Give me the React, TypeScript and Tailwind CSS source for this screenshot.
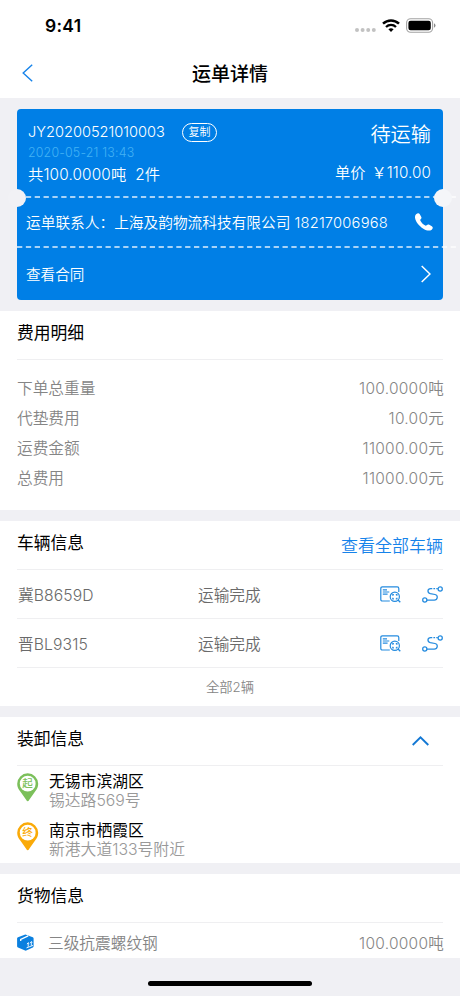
import type { ReactNode } from 'react';

const FEES = [
  { label: '下单总重量', value: '100.0000吨' },
  { label: '代垫费用', value: '10.00元' },
  { label: '运费金额', value: '11000.00元' },
  { label: '总费用', value: '11000.00元' },
];

const VEHICLES = [
  { plate: '冀B8659D', status: '运输完成' },
  { plate: '晋BL9315', status: '运输完成' },
];

function StatusBar() {
  return (
    <div className="flex h-[52px] items-center justify-between pl-[45px] pr-[24px]">
      <span className="text-[17.5px] font-semibold tracking-[0.3px] text-black">9:41</span>
      <div className="-mt-[2px] flex items-center">
        <svg className="mt-[9px] mr-[6px] h-[4px] w-[21px]" viewBox="0 0 21 4" fill="#c2c2c2">
          <circle cx="2" cy="2" r="2" />
          <circle cx="7.6" cy="2" r="2" />
          <circle cx="13.2" cy="2" r="2" />
          <circle cx="18.8" cy="2" r="2" />
        </svg>
        <svg className="mr-[6px] h-[13px] w-[18px]" viewBox="0 0 18 13" fill="none" stroke="#000">
          <path d="M1 4.7C5.6.4 12.4.4 17 4.7" strokeWidth="2.5" />
          <path d="M4 8C6.9 5.2 11.1 5.2 14 8" strokeWidth="2.3" />
          <path d="M9 13 6.4 10.3Q9 8 11.6 10.3Z" fill="#000" stroke="none" />
        </svg>
        <svg className="h-[15px] w-[30px]" viewBox="0 0 30 15">
          <rect x="0.6" y="0.8" width="26" height="13.4" rx="4" fill="none" stroke="#a3a3a3" strokeWidth="1.1" />
          <rect x="2.4" y="2.7" width="22.4" height="9.6" rx="2.2" fill="#000" />
          <path d="M28 5.3q1.5.7 1.5 2.2T28 9.7z" fill="#8a8a8a" />
        </svg>
      </div>
    </div>
  );
}

function NavBar() {
  return (
    <header className="grid h-[46px] grid-cols-[48px_1fr_48px] items-center">
      <svg className="-mt-[4px] ml-[22px] h-[18px] w-[11px]" viewBox="0 0 11 18" fill="none" stroke="#1683ea" strokeWidth="1.4">
        <path d="M10.2.8 1.2 9l9 8.2" />
      </svg>
      <h1 className="pt-[1px] text-center text-[19px] font-medium text-black">运单详情</h1>
    </header>
  );
}

function DashedLine() {
  return (
    <svg className="block h-[2px] w-[443px]" viewBox="0 0 443 2">
      <path d="M0 1H439" stroke="#fff" strokeOpacity="0.88" strokeWidth="1.6" strokeDasharray="5.3 3.55" />
    </svg>
  );
}

function OrderCard() {
  return (
    <section className="relative h-[191px] w-[426px] rounded-[4px] bg-[#007fe6] font-[350] text-white">
      <div className="flex h-[87px] justify-between pl-[11px] pr-[12px]">
        <div className="flex flex-col pt-[13px]">
          <div className="flex h-[20px] items-center">
            <span className="w-[154px] pt-[1px] text-[14.6px]">JY20200521010003</span>
            <span className="flex h-[19px] w-[35px] items-center justify-center rounded-full border border-white text-[11px]">
              复制
            </span>
          </div>
          <span className="h-[20px] text-[12.4px] leading-[21px] tracking-[0.18px] text-[#43b2f4]">2020-05-21 13:43</span>
          <span className="h-[24px] text-[15.3px] leading-[26px] tracking-[0.15px] whitespace-pre">共100.0000吨{'  '}2件</span>
        </div>
        <div className="flex flex-col items-end pt-[10px]">
          <span className="h-[30px] text-[20.2px] leading-[32px]">待运输</span>
          <span className="mt-[12px] h-[24px] text-[15.2px] leading-[24px] tracking-[0.1px]">
            单价<span className="ml-[6px]">￥</span>110.00
          </span>
        </div>
      </div>
      <DashedLine />
      <div className="flex h-[48px] items-center justify-between pr-[10px] pl-[9px]">
        <span className="pt-[3px] text-[14.7px] whitespace-nowrap">
          运单联系人：上海及韵物流科技有限公司 <span className="tracking-[0.2px]">18217006968</span>
        </span>
        <svg className="h-[18px] w-[18px]" viewBox="0 0 18 18" fill="#fff">
          <path d="M1.1 1.3C2.4-.1 4-.2 4.8 1.2L6.3 4.1C6.9 5.3 5.6 6.3 5.1 7.1 6.1 9.5 8.3 11.8 10.8 12.8 11.7 12.2 12.6 11 13.9 11.6L16.8 13.2C18.3 14.1 17.9 15.6 16.7 16.7 13.4 19.3 7.3 15.8 4.6 12.8 1.2 9.3-1.7 4.2 1.1 1.3Z" />
        </svg>
      </div>
      <DashedLine />
      <div className="flex h-[52px] items-center justify-between pr-[12px] pl-[9px]">
        <span className="pt-[3px] text-[14.6px]">查看合同</span>
        <svg className="h-[18px] w-[10px]" viewBox="0 0 10 18" fill="none" stroke="#fff" strokeWidth="1.5">
          <path d="m.7 1 8.3 8-8.3 8" />
        </svg>
      </div>
      <span className="absolute top-[80px] left-[-9px] size-[18px] rounded-full bg-[#f1f1f5]" />
      <span className="absolute top-[80px] right-[-9px] size-[18px] rounded-full bg-[#f5f6f9]" />
    </section>
  );
}

function Section({ title, action, children }: { title: string; action?: ReactNode; children: ReactNode }) {
  return (
    <section className="bg-white px-[17px]">
      <div className="flex h-[49px] items-center justify-between border-b border-[#efeff1] pb-[2px]">
        <h2 className="text-[16.8px] text-black">{title}</h2>
        {action}
      </div>
      {children}
    </section>
  );
}

function DocSearchIcon() {
  return (
    <svg className="h-[17px] w-[21px]" viewBox="0 0 21 17" fill="none" stroke="#248bdf" strokeWidth="1.2">
      <path d="M9.8 15H2.4Q.8 15 .8 13.4V2.4Q.8.8 2.4.8H17.2Q18.8.8 18.8 2.4V6" />
      <path d="M2.8 3.8H7M2.8 6H9.3M2.8 8.2H7.6" />
      <circle cx="14.8" cy="10.8" r="4.6" />
      <path d="m18 14 2.3 2.3" strokeWidth="1.3" />
      <path d="M12.8 9.8V8.7h1.1M15.8 8.7h1.1v1.1M16.9 11.8v1.1h-1.1M13.9 12.9h-1.1v-1.1" />
    </svg>
  );
}

function RouteIcon() {
  return (
    <svg className="h-[17px] w-[21px]" viewBox="0 0 21 17" fill="none" stroke="#248bdf" strokeWidth="1.25">
      <circle cx="18.2" cy="2.9" r="2.1" />
      <circle cx="2.8" cy="13.9" r="2.1" />
      <path d="M4.9 14.1H12.2C15.8 14.1 16.4 9.3 13 8.5L8.3 7.6C5 6.8 5.3 2.5 8.7 2.5H10.3M11.4 2.5H13.1M14.3 2.5H15.8" />
    </svg>
  );
}

function Pin({ label, color, text }: { label: string; color: string; text: string }) {
  return (
    <div className="relative h-[29px] w-[22px]">
      <svg className="h-[29px] w-[22px]" viewBox="0 0 22 29">
        <path d="M10.7 28.2Q9.9 28.2 9.3 27L3.3 18.5C1.4 16.3.2 13.8.2 10.8a10.5 10.5 0 0 1 21 0c0 3-1.2 5.5-3.1 7.7L12.1 27q-.6 1.2-1.4 1.2Z" fill={color} />
        <circle cx="10.7" cy="10.7" r="7.9" fill="#fff" />
      </svg>
      <span className={`absolute top-0 left-0 w-[21px] text-center text-[10.5px] leading-[21px] font-medium ${text}`}>{label}</span>
    </div>
  );
}

function Stop({ pin, city, address }: { pin: ReactNode; city: string; address: string }) {
  return (
    <div className="flex h-[49px] last:h-[48px]">
      <div className="w-[32px] pt-[7px]">{pin}</div>
      <div className="pt-[6px] text-[15.8px] leading-[19px]">
        <p className="text-black">{city}</p>
        <p className="font-[350] text-[#999]">{address}</p>
      </div>
    </div>
  );
}

function CargoIcon() {
  return (
    <svg className="-mt-[2px] h-[17px] w-[17px]" viewBox="0 0 17 17">
      <path d="M8.3.4 15.8 3.3Q16.6 3.7 16.6 4.6V12.2Q16.6 13.1 15.8 13.5L8.7 16.7 1 13.6Q.1 13.1.1 12.2V4.6Q.1 3.7 1 3.3Z" fill="#0b80df" />
      <path d="M3.7 7V5.3L11.2 1.9" fill="none" stroke="#fff" strokeWidth="1.3" />
      <path d="M9.5 13.9 16 11.4M11.2 12.8V8.9M10 10.1l1.2-1.4 1.1 1M14.3 11.7V7.9M13.2 8.9l1.1-1.3 1.1.7" fill="none" stroke="#fff" strokeWidth="0.9" />
    </svg>
  );
}

export default function App() {
  return (
    <main className="flex h-[996px] w-[460px] flex-col overflow-hidden bg-[#f0f0f4] font-['Inter','Noto_Sans_CJK_SC',sans-serif]">
      <div className="h-[98px] shrink-0 bg-white">
        <StatusBar />
        <NavBar />
      </div>

      <div className="px-[17px] pt-[11px] pb-[11px]">
        <OrderCard />
      </div>

      <div className="flex flex-col gap-[11px]">
        <Section title="费用明细">
          <div className="h-[150px] pt-[13px]">
            {FEES.map((fee) => (
              <div key={fee.label} className="flex h-[30px] items-center justify-between pt-px text-[15.7px] font-[350] text-[#858585]">
                <span>{fee.label}</span>
                <span className="-mr-px text-[15.5px] tracking-[0.25px]">{fee.value}</span>
              </div>
            ))}
          </div>
        </Section>

        <Section title="车辆信息" action={<a className="pt-[6px] text-[17px] font-[350] text-[#1683ea]">查看全部车辆</a>}>
          {VEHICLES.map((vehicle) => (
            <div
              key={vehicle.plate}
              className="grid h-[49px] grid-cols-[181px_1fr_21px_21px] items-center border-b border-[#efeff1] text-[15.7px] font-[350] text-[#6a6a6a]"
            >
              <span className="pt-[3px] pl-[1px] tracking-[0.1px]">{vehicle.plate}</span>
              <span className="pt-[3px]">{vehicle.status}</span>
              <span className="-ml-[21px] pt-px">
                <DocSearchIcon />
              </span>
              <RouteIcon />
            </div>
          ))}
          <p className="h-[38px] text-center text-[13.3px] leading-[38px] font-[350] text-[#858585]">全部2辆</p>
        </Section>

        <Section
          title="装卸信息"
          action={
            <svg className="mt-[2px] mr-[14px] h-[10px] w-[17px]" viewBox="0 0 17 10" fill="none" stroke="#1378d4" strokeWidth="1.9">
              <path d="M.7 9 8.5 1.4 16.3 9" />
            </svg>
          }
        >
          <Stop
            pin={<Pin label="起" color="#7cc05b" text="text-[#7cc05b]" />}
            city="无锡市滨湖区"
            address="锡达路569号"
          />
          <Stop
            pin={<Pin label="终" color="#faaa09" text="text-[#faaa09]" />}
            city="南京市栖霞区"
            address="新港大道133号附近"
          />
        </Section>

        <Section title="货物信息">
          <div className="flex h-[35px] items-center pt-[6px] text-[15.7px] font-[350] text-[#858585]">
            <CargoIcon />
            <span className="ml-[14px] flex-1">三级抗震螺纹钢</span>
            <span className="-mr-px text-[15.5px] tracking-[0.25px]">100.0000吨</span>
          </div>
        </Section>
      </div>

      <div className="mx-auto mt-auto mb-[10px] h-[5px] w-[164px] rounded-full bg-black" />
    </main>
  );
}
